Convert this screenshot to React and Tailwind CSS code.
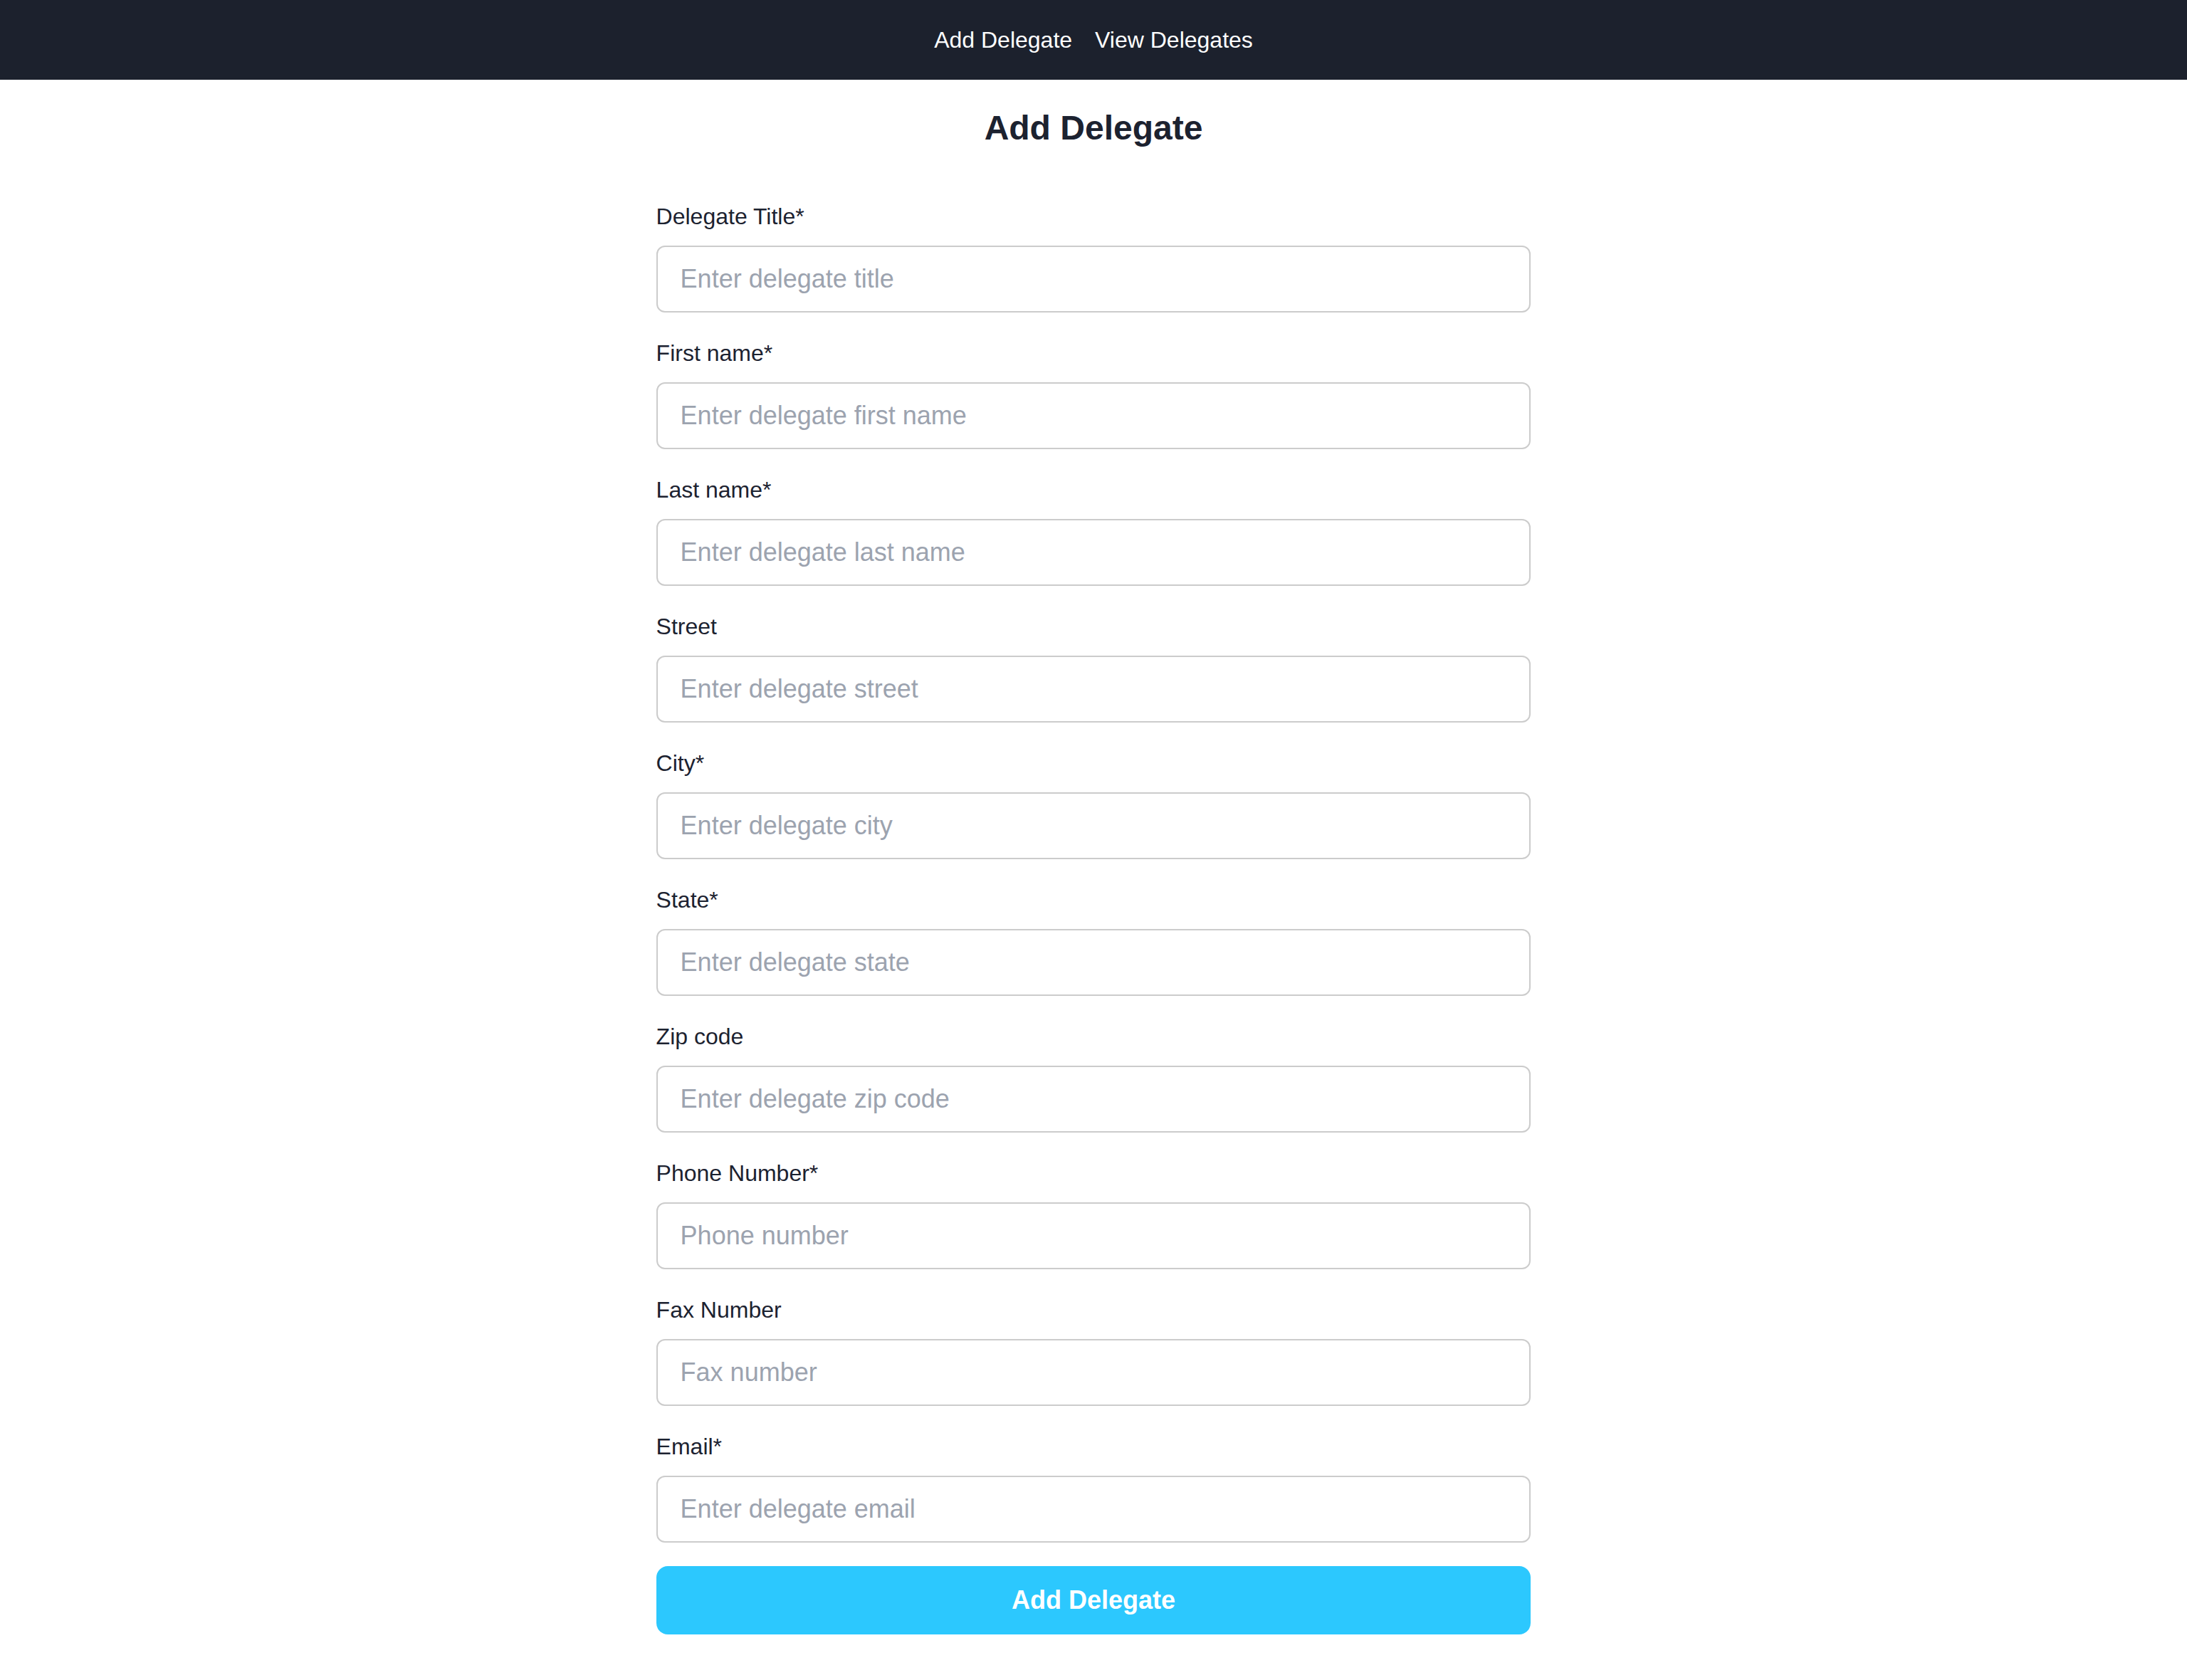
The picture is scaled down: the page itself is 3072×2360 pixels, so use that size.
export default function App() {
  const fields = [
    { label: "Delegate Title*", placeholder: "Enter delegate title" },
    { label: "First name*", placeholder: "Enter delegate first name" },
    { label: "Last name*", placeholder: "Enter delegate last name" },
    { label: "Street", placeholder: "Enter delegate street" },
    { label: "City*", placeholder: "Enter delegate city" },
    { label: "State*", placeholder: "Enter delegate state" },
    { label: "Zip code", placeholder: "Enter delegate zip code" },
    { label: "Phone Number*", placeholder: "Phone number" },
    { label: "Fax Number", placeholder: "Fax number" },
    { label: "Email*", placeholder: "Enter delegate email" },
  ];

  return (
    <div className="min-h-screen bg-white font-['Liberation_Sans',Arial,sans-serif]">
      <nav className="h-[112px] bg-[#1c212d] flex items-center justify-center gap-8 text-[32px] text-white">
        <a href="#">Add Delegate</a>
        <a href="#">View Delegates</a>
      </nav>
      <main className="flex flex-col items-center">
        <h1 className="mt-9 text-[48px] leading-[64px] font-bold text-[#1c2230]">
          Add Delegate
        </h1>
        <form className="w-2/5 mt-[68px] flex flex-col" onSubmit={(e) => e.preventDefault()}>
          {fields.map((f) => (
            <div key={f.label} className="mb-[33px] flex flex-col">
              <label className="text-[32px] leading-[48px] text-[#1c2230] mb-[17px]">
                {f.label}
              </label>
              <input
                type="text"
                placeholder={f.placeholder}
                className="h-[94px] w-full border-2 border-[#cccccc] rounded-[12px] px-8 text-[36px] text-[#1c2230] placeholder:text-[#9ca3af] outline-none"
              />
            </div>
          ))}
          <button
            type="submit"
            className="h-[96px] w-full rounded-2xl bg-[#2cc8fe] text-white font-bold text-[36px]"
          >
            Add Delegate
          </button>
        </form>
      </main>
    </div>
  );
}
